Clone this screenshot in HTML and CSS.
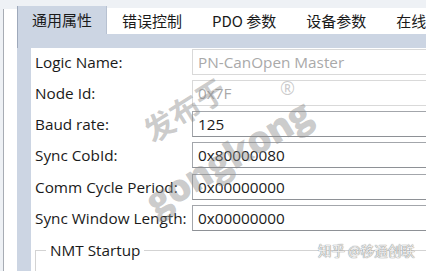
FILE: index.html
```html
<!DOCTYPE html>
<html lang="zh">
<head>
<meta charset="utf-8">
<link rel="stylesheet" href="styles.css">
</head>
<body>
<div class="app">
  <div class="side"></div>
  <div class="main">
    <div class="tabs">
      <div class="tab active">通用属性</div>
      <div class="tab">错误控制</div>
      <div class="tab">PDO 参数</div>
      <div class="tab">设备参数</div>
      <div class="tab">在线</div>
    </div>
    <div class="band"></div>
    <div class="panel">
      <div class="row"><span class="label">Logic Name:</span><div class="input disabled">PN-CanOpen Master</div></div>
      <div class="row"><span class="label">Node Id:</span><div class="input disabled">0x7F</div></div>
      <div class="row"><span class="label">Baud rate:</span><div class="input">125</div></div>
      <div class="row"><span class="label">Sync CobId:</span><div class="input">0x80000080</div></div>
      <div class="row"><span class="label">Comm Cycle Period:</span><div class="input">0x00000000</div></div>
      <div class="row"><span class="label">Sync Window Length:</span><div class="input">0x00000000</div></div>
      <div class="group"><span class="legend">NMT Startup</span></div>
    </div>
  </div>
  <div class="wm wm-cn">发布于</div>
  <div class="wm wm-en">gongkong</div>
  <div class="wm wm-r">®</div>
  <div class="wm-zh">知乎 @移通创联</div>
</div>
</body>
</html>
```
FILE: styles.css
```css
* { box-sizing: border-box; }
html, body { margin: 0; padding: 0; }
body {
  width: 426px;
  height: 271px;
  overflow: hidden;
  background: #eef1f5;
  font-family: "Open Sans", "Noto Sans CJK SC", sans-serif;
  color: #1a1a1a;
}
.app {
  position: relative;
  display: flex;
  height: 271px;
  overflow: hidden;
}
.side {
  flex: none;
  width: 14px;
  margin-left: 3px;
  margin-top: 9px;
  background: #fff;
  border-left: 1px solid #a7acb4;
}
.main {
  flex: 1;
  margin-top: 6px;
  display: flex;
  flex-direction: column;
  min-width: 0;
  overflow: hidden;
}
.tabs {
  flex: none;
  display: flex;
  height: 28px;
  align-items: flex-end;
}
.tab {
  flex: none;
  height: 26px;
  padding: 0 15px;
  background: #fff;
  font-family: "Noto Sans CJK SC", sans-serif;
  font-size: 15px;
  line-height: 26px;
  white-space: nowrap;
  color: #1a1a1a;
}
.tab.active {
  height: 28px;
  line-height: 28px;
  background: #ccd5e3;
  border-left: 1px solid #9ea9bb;
  border-right: 1px solid #b7c1d1;
  padding: 0 14px;
}
.band {
  flex: none;
  height: 14px;
  background: #ccd5e3;
  border-left: 1px solid #9ea9bb;
}
.panel {
  flex: 1;
  min-height: 0;
  overflow: hidden;
  background: #fff;
  border-left: 14px solid #ccd5e3;
  padding: 0.5px 0 0 4px;
  display: flex;
  flex-direction: column;
  gap: 5.3px;
}
.row {
  flex: none;
  display: flex;
  align-items: center;
  height: 26px;
}
.label {
  width: 157px;
  flex: none;
  font-size: 15.3px;
  white-space: nowrap;
}
.input {
  flex: none;
  width: 300px;
  height: 26px;
  border: 1px solid #a3a6ab;
  border-bottom-color: #8e9196;
  padding-left: 5px;
  font-size: 15.3px;
  line-height: 24px;
  color: #1a1a1a;
  white-space: nowrap;
}
.input.disabled {
  border-color: #d9d9d9;
  color: #a9a9a9;
}
.group {
  flex: none;
  margin-top: 13.7px;
  height: 40px;
  border-top: 1px solid #d3d3d3;
  border-left: 1px solid #d3d3d3;
  position: relative;
}
.legend {
  position: absolute;
  left: 10px;
  top: -12px;
  background: #fff;
  padding: 0 4px;
  font-size: 15.3px;
  line-height: 22px;
}
.wm {
  position: absolute;
  color: rgba(140, 140, 140, 0.45);
  white-space: nowrap;
  pointer-events: none;
  transform-origin: left top;
}
.wm-cn {
  left: 138px;
  top: 120px;
  font-family: "Noto Sans CJK SC", sans-serif;
  font-weight: 700;
  font-size: 30px;
  line-height: 1;
  transform: rotate(-32deg);
}
.wm-en {
  left: 138px;
  top: 188px;
  font-family: "Open Sans", sans-serif;
  font-weight: 800;
  font-size: 38px;
  line-height: 1;
  transform: rotate(-31deg);
  letter-spacing: -1px;
}
.wm-r {
  left: 280px;
  top: 76px;
  font-size: 18px;
  font-family: "Open Sans", sans-serif;
}
.wm-zh {
  position: absolute;
  left: 318px;
  top: 240px;
  font-family: "Noto Sans CJK SC", sans-serif;
  font-size: 13.5px;
  color: #ececec;
  text-shadow: 0 0 1px #888, 0 0 1px #888;
  white-space: nowrap;
}
```
